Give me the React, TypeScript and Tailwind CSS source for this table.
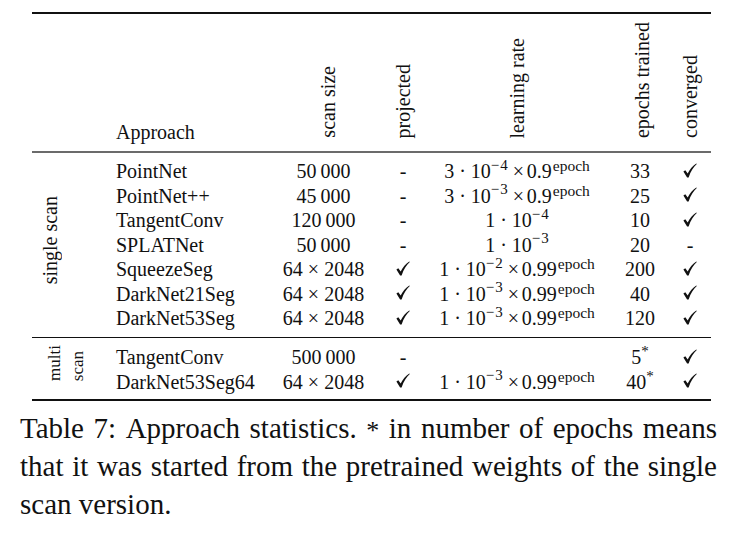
const cols = 'grid grid-cols-[84px_156px_103px_56px_172px_74px_26px_8px]';

type Row = {
  name: string;
  size: string;
  proj: boolean;
  lr?: { base: string; exp: string; decay?: string };
  epochs: string;
  star?: boolean;
  conv: boolean;
};

const single: Row[] = [
  { name: 'PointNet', size: '50\u2009000', proj: false, lr: { base: '3', exp: '4', decay: '0.9' }, epochs: '33', conv: true },
  { name: 'PointNet++', size: '45\u2009000', proj: false, lr: { base: '3', exp: '3', decay: '0.9' }, epochs: '25', conv: true },
  { name: 'TangentConv', size: '120\u2009000', proj: false, lr: { base: '1', exp: '4' }, epochs: '10', conv: true },
  { name: 'SPLATNet', size: '50\u2009000', proj: false, lr: { base: '1', exp: '3' }, epochs: '20', conv: false },
  { name: 'SqueezeSeg', size: '64 × 2048', proj: true, lr: { base: '1', exp: '2', decay: '0.99' }, epochs: '200', conv: true },
  { name: 'DarkNet21Seg', size: '64 × 2048', proj: true, lr: { base: '1', exp: '3', decay: '0.99' }, epochs: '40', conv: true },
  { name: 'DarkNet53Seg', size: '64 × 2048', proj: true, lr: { base: '1', exp: '3', decay: '0.99' }, epochs: '120', conv: true },
];

const multi: Row[] = [
  { name: 'TangentConv', size: '500\u2009000', proj: false, epochs: '5', star: true, conv: true },
  { name: 'DarkNet53Seg64', size: '64 × 2048', proj: true, lr: { base: '1', exp: '3', decay: '0.99' }, epochs: '40', star: true, conv: true },
];

const firstLine = ['Table', '7:', 'Approach', 'statistics.', '*', 'in', 'number', 'of', 'epochs', 'means'];

// amssymb-like \checkmark
function Check() {
  return (
    <svg width="14" height="15" viewBox="0 0 14 15" className="translate-y-[-1px]">
      <path
        d="M0.4 8.6 L2.3 7.2 L4.7 10.4 C6.9 6.2 9.6 2.9 13.3 0.4 L13.8 1.1 C10.5 4 7.8 8.3 5.6 14.4 L4.1 14.4 Z"
        fill="#111"
      />
    </svg>
  );
}

function Mark({ on }: { on: boolean }) {
  return on ? <Check /> : <span>-</span>;
}

function Rate({ lr }: { lr?: Row['lr'] }) {
  if (!lr) return null;
  return (
    <span className="whitespace-nowrap">
      {lr.base}
      <span className="mx-[5px]">·</span>
      10
      <sup className="text-[15px] -top-[0.55em]">
        <span className="pr-[1px]">−</span>
        {lr.exp}
      </sup>
      {lr.decay && (
        <>
          <span className="inline-block w-[15px] ml-[3px] mr-[1px] text-center">×</span>
          {lr.decay}
          <sup className="text-[15.5px] -top-[0.45em] ml-[1px]">epoch</sup>
        </>
      )}
    </span>
  );
}

function Rotated({ children, className = '' }: { children: React.ReactNode; className?: string }) {
  return <span className={`[writing-mode:vertical-rl] rotate-180 whitespace-nowrap ${className}`}>{children}</span>;
}

function Cells({ r }: { r: Row }) {
  return (
    <>
      <div className="col-start-2 flex items-center">{r.name}</div>
      <div className="flex items-center justify-center">{r.size}</div>
      <div className="flex items-center justify-center">
        <Mark on={r.proj} />
      </div>
      <div className="flex items-center justify-center">
        <Rate lr={r.lr} />
      </div>
      <div className="flex items-center justify-center">
        {r.epochs}
        {r.star && <sup className="text-[15px] -top-[0.4em]">*</sup>}
      </div>
      <div className="flex items-center justify-center">
        <Mark on={r.conv} />
      </div>
      <div />
    </>
  );
}

export default function App() {
  return (
    <div className="w-[752px] h-[543px] bg-white text-[#111] font-['Liberation_Serif','Times_New_Roman',serif] overflow-hidden">
      <div className="ml-[32px] pt-[12px] w-[679px] text-[20px] leading-[24.5px]">
        <div className="h-[2px] bg-[#111]" />

        <div className={`${cols} h-[137px]`}>
          <div />
          <div className="flex items-end pb-[7px] leading-[24px]">Approach</div>
          <div className="flex items-end justify-center pb-[13px] pl-[9px]">
            <Rotated>scan size</Rotated>
          </div>
          <div className="flex items-end justify-center pb-[13px]">
            <Rotated>projected</Rotated>
          </div>
          <div className="flex items-end justify-center pb-[13px]">
            <Rotated>learning rate</Rotated>
          </div>
          <div className="flex items-end justify-center pb-[13px] pl-[4px]">
            <Rotated>epochs trained</Rotated>
          </div>
          <div className="flex items-end justify-center pb-[13px]">
            <Rotated>converged</Rotated>
          </div>
          <div />
        </div>

        <div className="h-[2px] bg-[#6b6b6b]" />

        <div className={`${cols} auto-rows-[24.5px] pt-[6px] pb-[6.5px]`}>
          <div className="row-span-7 col-start-1 row-start-1 flex items-center pl-[6px] pb-[10px]">
            <Rotated className="leading-[24px]">single scan</Rotated>
          </div>
          {single.map((r) => (
            <Cells key={r.name} r={r} />
          ))}
        </div>

        <div className="h-px bg-[#111]" />

        <div className={`${cols} auto-rows-[24.5px] pt-[7px] pb-[5px]`}>
          <div className="row-span-2 col-start-1 row-start-1 flex items-end pl-[11px] pb-[13px] text-[17px]">
            <Rotated className="w-[23px] leading-[23px]">multi</Rotated>
            <Rotated className="w-[23px] leading-[23px]">scan</Rotated>
          </div>
          {multi.map((r) => (
            <Cells key={r.name} r={r} />
          ))}
        </div>

        <div className="h-[2px] bg-[#111]" />
      </div>

      <div className="ml-[20px] mt-[8px] w-[697px] text-[29px] leading-[38px]">
        <p className="flex justify-between whitespace-nowrap">
          {firstLine.map((w) =>
            w === '*' ? (
              <span key={w} className="mt-[6px] text-[26px] leading-[32px]">
                *
              </span>
            ) : (
              <span key={w}>{w}</span>
            ),
          )}
        </p>
        <p className="text-justify [text-align-last:justify]">
          that it was started from the pretrained weights of the single
        </p>
        <p>scan version.</p>
      </div>
    </div>
  );
}
